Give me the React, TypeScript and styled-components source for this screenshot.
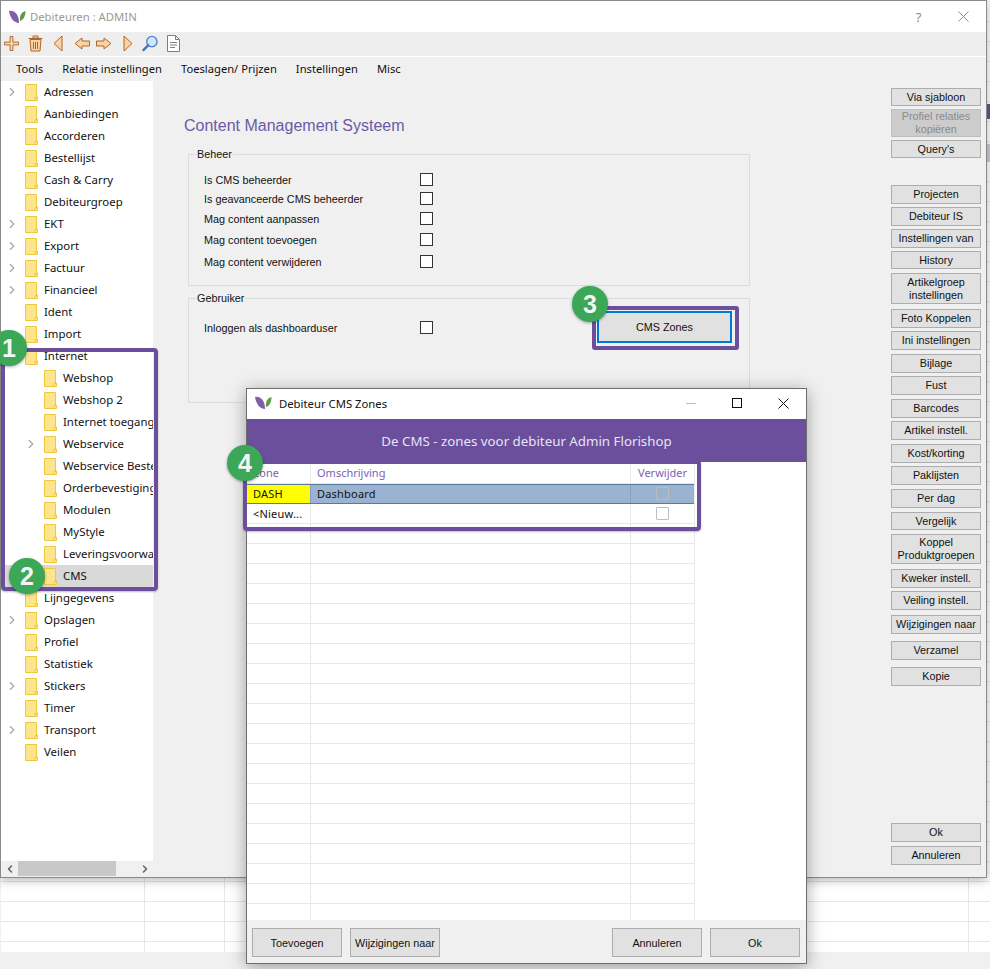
import React, { FC } from 'react'
import styled, { createGlobalStyle } from 'styled-components'
import { ChevronLeft, ChevronRight } from 'lucide-react'

const PURPLE = '#6b4f9c'
const UI_FONT = '"Noto Sans", "Open Sans", sans-serif'
const FORM_FONT = '"Liberation Sans", Arial, sans-serif'

const GlobalStyle = createGlobalStyle`
  html, body {
    margin: 0;
    padding: 0;
    background: #f0f0f0;
  }
  * {
    box-sizing: border-box;
  }
`

const Page = styled.div`
  position: relative;
  width: 990px;
  height: 969px;
  overflow: hidden;
  display: flex;
  flex-direction: column;
`

const Sheet = styled.div`
  height: 952px;
  margin-left: 1px;
  background-color: #fff;
  background-image: linear-gradient(#e6e6e6, #e6e6e6), linear-gradient(#e6e6e6, #e6e6e6),
    linear-gradient(#e6e6e6, #e6e6e6), linear-gradient(to bottom, #e6e6e6 1px, transparent 1px);
  background-size: 1px 100%, 1px 100%, 1px 100%, 100% 20px;
  background-position: 143px 0, 223px 0, 967px 0, 0 1px;
  background-repeat: no-repeat, no-repeat, no-repeat, repeat-y;
`

const SheetStrip = styled.div<{ $top: number; $height: number; $color: string }>`
  position: absolute;
  right: 0;
  top: ${(p) => p.$top}px;
  width: 4px;
  height: ${(p) => p.$height}px;
  background: ${(p) => p.$color};
`

const MainWindow = styled.div`
  position: absolute;
  left: 0;
  top: 0;
  width: 987px;
  height: 878px;
  display: flex;
  flex-direction: column;
  background: #f0f0f0;
  border: 1px solid #8a8a8a;
  box-shadow: 0 2px 10px rgba(0, 0, 0, 0.3);
`

const TitleBar = styled.div<{ $height: number; $lift?: number }>`
  height: ${(p) => p.$height}px;
  padding-bottom: ${(p) => p.$lift ?? 0}px;
  flex: none;
  display: flex;
  align-items: center;
  background: #fff;
`

const TitleText = styled.span<{ $muted?: boolean }>`
  font: 11.3px ${UI_FONT};
  color: ${(p) => (p.$muted ? '#9a9a9a' : '#111')};
  flex: 1;
`

const Logo = styled.svg`
  flex: none;
  width: 17px;
  height: 14px;
`

const TitleLogo = styled(Logo)<{ $left: number; $right: number }>`
  margin-left: ${(p) => p.$left}px;
  margin-right: ${(p) => p.$right}px;
`

const WindowControl = styled.div<{ $width: number }>`
  flex: none;
  width: ${(p) => p.$width}px;
  height: 100%;
  display: flex;
  align-items: center;
  justify-content: center;
`

const HelpMark = styled.span`
  font: 13px ${UI_FONT};
  color: #8c8c8c;
`

const Toolbar = styled.div`
  height: 23px;
  flex: none;
  display: flex;
  align-items: center;
  padding-left: 3px;
  margin-bottom: 1px;
  background: #eeeeee;
`

const ToolIcon = styled.svg<{ $gap: number }>`
  flex: none;
  height: 17px;
  margin-left: ${(p) => p.$gap}px;
`

const MenuSeparator = styled.div`
  height: 1px;
  flex: none;
  background: #fff;
`

const MenuBar = styled.div`
  height: 24px;
  flex: none;
  display: flex;
  align-items: center;
  gap: 19px;
  padding: 0 0 2px 15px;
  font: 11.2px ${UI_FONT};
  color: #111;
`

const Body = styled.div`
  flex: 1;
  min-height: 0;
  display: flex;
`

const TreePane = styled.div`
  flex: none;
  width: 152px;
  display: flex;
  flex-direction: column;
`

const Tree = styled.div`
  flex: 1;
  overflow: hidden;
  background: #fff;
`

const TreeRow = styled.div<{ $depth: number; $selected?: boolean }>`
  height: 22px;
  display: flex;
  align-items: center;
  padding-left: ${(p) => 4 + p.$depth * 19}px;
  white-space: nowrap;
  background: ${(p) => (p.$selected ? '#d9d9d9' : 'transparent')};
  font: 11.4px ${UI_FONT};
  color: #111;
`

const TreeLabel = styled.span`
  margin-bottom: 2px;
`

const Expander = styled.span`
  flex: none;
  width: 20px;
  display: flex;
  color: #a6a6a6;
`

const FolderGlyph = styled.svg`
  flex: none;
  width: 13px;
  height: 17px;
  margin-right: 6px;
`

const ScrollBar = styled.div`
  height: 15px;
  margin-bottom: 1px;
  flex: none;
  display: flex;
  align-items: center;
  background: #f0f0f0;
  color: #606060;
`

const ScrollArrow = styled.span`
  flex: none;
  width: 17px;
  display: flex;
  justify-content: center;
`

const ScrollThumb = styled.div`
  width: 98px;
  height: 100%;
  flex: none;
  margin-right: 20px;
  background: #c8c8c8;
`

const Content = styled.div`
  flex: 1;
  padding: 35px 0 0 35px;
`

const Heading = styled.h1`
  margin: 0 0 12px -4px;
  height: 20px;
  font: 400 16px/20px ${FORM_FONT};
  color: #6c5aa6;
`

const Group = styled.fieldset<{ $height: number }>`
  width: 562px;
  height: ${(p) => p.$height}px;
  margin: 0 0 6px;
  padding: 0 0 0 15px;
  border: 1px solid #dcdcdc;
  font: 10.8px ${FORM_FONT};
  color: #111;
`

const GroupTitle = styled.legend`
  margin-left: -8px;
  padding: 0 1px;
  line-height: 13px;
`

const FormRow = styled.div<{ $gap: number }>`
  display: flex;
  align-items: center;
  height: 19px;
  margin-top: ${(p) => p.$gap}px;
`

const FormLabel = styled.span`
  flex: none;
  width: 216px;
`

const CheckBox = styled.span`
  flex: none;
  width: 13px;
  height: 13px;
  background: #fff;
  border: 1px solid #333;
`

const FocusRing = styled.div`
  flex: none;
  width: 147px;
  height: 44px;
  margin-left: 159px;
  padding: 1px;
  border: 4px solid ${PURPLE};
  border-radius: 3px;
`

const FocusedButton = styled.button`
  display: block;
  width: 135px;
  height: 32px;
  padding: 0;
  background: #e1e1e1;
  border: 2px solid #0078d7;
  font: 10.8px ${FORM_FONT};
  color: #111;
`

const SideBar = styled.div`
  flex: none;
  width: 95px;
  padding: 7px 0 12px;
  display: flex;
  flex-direction: column;
`

const SideSpacer = styled.div`
  flex: 1;
`

const SideButton = styled.button<{ $height: number; $gap: number; $disabled?: boolean }>`
  flex: none;
  width: 90px;
  height: ${(p) => p.$height}px;
  margin-top: ${(p) => p.$gap}px;
  padding: 0;
  background: ${(p) => (p.$disabled ? '#cccccc' : '#e1e1e1')};
  border: 1px solid ${(p) => (p.$disabled ? '#bfbfbf' : '#adadad')};
  font: 10.8px/13px ${FORM_FONT};
  color: ${(p) => (p.$disabled ? '#8a8a8a' : '#111')};
`

const Dialog = styled.div`
  position: absolute;
  left: 246px;
  top: 388px;
  width: 561px;
  height: 576px;
  display: flex;
  flex-direction: column;
  background: #fff;
  border: 1px solid #6e6e6e;
  box-shadow: 0 3px 16px rgba(0, 0, 0, 0.35);
`

const Banner = styled.div`
  height: 43px;
  flex: none;
  display: flex;
  align-items: center;
  justify-content: center;
  background: ${PURPLE};
  font: 13.3px ${UI_FONT};
  color: #e4e4f4;
`

const GridArea = styled.div`
  flex: 1;
  min-height: 0;
  overflow: hidden;
  width: 448px;
  border-right: 1px solid #e8e8e8;
`

const GridCell = styled.div<{ $yellow?: boolean; $center?: boolean }>`
  display: flex;
  align-items: center;
  justify-content: ${(p) => (p.$center ? 'center' : 'flex-start')};
  padding-left: ${(p) => (p.$center ? 0 : 6)}px;
  overflow: hidden;
  white-space: nowrap;
  border-right: 1px solid #e8e8e8;
  background: ${(p) => (p.$yellow ? '#ffff00' : 'transparent')};
  &:last-child {
    border-right: 0;
  }
`

const GridRow = styled.div<{ $height: number; $active?: boolean }>`
  display: grid;
  grid-template-columns: 64px 320px 1fr;
  height: ${(p) => p.$height}px;
  border-bottom: 1px solid ${(p) => (p.$active ? '#5c7a99' : '#e8e8e8')};
  border-top: ${(p) => (p.$active ? '1px solid #5c7a99' : '0')};
  background: ${(p) => (p.$active ? '#9ab3d0' : '#fff')};
  font: 11px ${UI_FONT};
  letter-spacing: 0.2px;
  color: #111;

  ${GridCell} {
    border-right-color: ${(p) => (p.$active ? '#86a0bd' : '#e8e8e8')};
    padding-bottom: ${(p) => (p.$active ? 2 : 0)}px;
  }
`

const HeaderLabel = styled.span`
  color: #7d5fb2;
  letter-spacing: 0;
`

const GridCheck = styled.span`
  width: 13px;
  height: 13px;
  border: 1px solid #bdbdbd;
  border-radius: 1px;
`

const DialogFooter = styled.div`
  height: 43px;
  flex: none;
  display: flex;
  align-items: flex-start;
  gap: 8px;
  padding: 8px 6px 0 5px;
  background: #f0f0f0;
`

const FooterButton = styled.button<{ $push?: boolean }>`
  width: 90px;
  height: 29px;
  margin-left: ${(p) => (p.$push ? 'auto' : 0)};
  padding: 0;
  background: #e1e1e1;
  border: 1px solid #adadad;
  font: 10.8px ${FORM_FONT};
  color: #111;
`

const Callout = styled.div<{ $left: number; $top: number; $width: number; $height: number }>`
  position: absolute;
  left: ${(p) => p.$left}px;
  top: ${(p) => p.$top}px;
  width: ${(p) => p.$width}px;
  height: ${(p) => p.$height}px;
  border: 4px solid ${PURPLE};
  border-radius: 4px;
  box-shadow: 0 1px 2px rgba(0, 0, 0, 0.25);
`

const Badge = styled.div<{ $left: number; $top: number }>`
  position: absolute;
  left: ${(p) => p.$left}px;
  top: ${(p) => p.$top}px;
  width: 36px;
  height: 36px;
  display: flex;
  align-items: center;
  justify-content: center;
  border-radius: 50%;
  background: #3ba757;
  box-shadow: 0 1px 3px rgba(0, 0, 0, 0.35);
  font: 700 25px ${FORM_FONT};
  color: #f4f4f4;
`

const LeafLogo: FC<{ left: number; right: number }> = ({ left, right }) => (
  <TitleLogo $left={left} $right={right} viewBox="0 0 17 14">
    <path d="M0 1 C5 0 10 4 10 13 C5 13 1 8 0 1 Z" fill="#7e5fa8" />
    <path d="M16.5 1 C12.5 2 10.5 5 11 11 C14.5 10 16.5 6 16.5 1 Z" fill="#5d9a45" />
  </TitleLogo>
)

const CloseGlyph: FC<{ color: string }> = ({ color }) => (
  <svg width="11" height="11" viewBox="0 0 11 11">
    <path d="M0.5 0.5 L10.5 10.5 M10.5 0.5 L0.5 10.5" stroke={color} strokeWidth="1" fill="none" />
  </svg>
)

const Folder: FC = () => (
  <FolderGlyph viewBox="0 0 13 17">
    <path d="M0.5 0.5 H11.5 V13 H12.5 V16.5 H0.5 Z" fill="#fde58e" stroke="#f0c83c" />
    <path d="M10 16 V13.5 H12" fill="none" stroke="#f0c83c" />
  </FolderGlyph>
)

const STROKE = '#b0672c'
const FILL = '#fbd2a4'

const ToolbarIcons: FC = () => (
  <>
    <ToolIcon $gap={0} width="15" viewBox="0 0 16 17">
      <path d="M6.5 1 H9.5 V7 H15.5 V10 H9.5 V16 H6.5 V10 H0.5 V7 H6.5 Z" fill={FILL} stroke={STROKE} />
    </ToolIcon>
    <ToolIcon $gap={9} width="15" viewBox="0 0 15 17">
      <path d="M2 4.5 H13 L12 16 H3 Z" fill={FILL} stroke={STROKE} />
      <path d="M0.5 3.5 H14.5 M5 1 H10 V3 H5 Z M5.5 7 V14 M7.5 7 V14 M9.5 7 V14" fill="none" stroke={STROKE} />
    </ToolIcon>
    <ToolIcon $gap={10} width="10" viewBox="0 0 10 17">
      <path d="M9 1 V16 L1 8.5 Z" fill={FILL} stroke={STROKE} />
    </ToolIcon>
    <ToolIcon $gap={11} width="16" viewBox="0 0 16 17">
      <path d="M8 3 L1 8.5 L8 14 V11 H15.5 V6 H8 Z" fill={FILL} stroke={STROKE} />
    </ToolIcon>
    <ToolIcon $gap={6} width="16" viewBox="0 0 16 17">
      <path d="M8 3 L15 8.5 L8 14 V11 H0.5 V6 H8 Z" fill={FILL} stroke={STROKE} />
    </ToolIcon>
    <ToolIcon $gap={11} width="10" viewBox="0 0 10 17">
      <path d="M1 1 V16 L9 8.5 Z" fill={FILL} stroke={STROKE} />
    </ToolIcon>
    <ToolIcon $gap={9} width="16" viewBox="0 0 17 17">
      <circle cx="10.5" cy="6.5" r="5.5" fill="#cfe6fb" stroke="#4a86c8" strokeWidth="1.4" />
      <path d="M6.5 10.5 L1.5 15.5" stroke="#3f73c0" strokeWidth="2.4" strokeLinecap="round" />
    </ToolIcon>
    <ToolIcon $gap={9} width="13" viewBox="0 0 13 17">
      <path d="M0.5 0.5 H8.5 L12.5 4.5 V16.5 H0.5 Z M8.5 0.5 V4.5 H12.5" fill="#fff" stroke="#7d7d7d" />
      <path d="M3 7.5 H10 M3 10 H10 M3 12.5 H8" stroke="#7d7d7d" />
    </ToolIcon>
  </>
)

const treeItems: { label: string; depth: number; expandable?: boolean; selected?: boolean }[] = [
  { label: 'Adressen', depth: 0, expandable: true },
  { label: 'Aanbiedingen', depth: 0 },
  { label: 'Accorderen', depth: 0 },
  { label: 'Bestellijst', depth: 0 },
  { label: 'Cash & Carry', depth: 0 },
  { label: 'Debiteurgroep', depth: 0 },
  { label: 'EKT', depth: 0, expandable: true },
  { label: 'Export', depth: 0, expandable: true },
  { label: 'Factuur', depth: 0, expandable: true },
  { label: 'Financieel', depth: 0, expandable: true },
  { label: 'Ident', depth: 0 },
  { label: 'Import', depth: 0 },
  { label: 'Internet', depth: 0 },
  { label: 'Webshop', depth: 1 },
  { label: 'Webshop 2', depth: 1 },
  { label: 'Internet toegang', depth: 1 },
  { label: 'Webservice', depth: 1, expandable: true },
  { label: 'Webservice Bestellingen', depth: 1 },
  { label: 'Orderbevestigingen', depth: 1 },
  { label: 'Modulen', depth: 1 },
  { label: 'MyStyle', depth: 1 },
  { label: 'Leveringsvoorwaarden', depth: 1 },
  { label: 'CMS', depth: 1, selected: true },
  { label: 'Lijngegevens', depth: 0 },
  { label: 'Opslagen', depth: 0, expandable: true },
  { label: 'Profiel', depth: 0 },
  { label: 'Statistiek', depth: 0 },
  { label: 'Stickers', depth: 0, expandable: true },
  { label: 'Timer', depth: 0 },
  { label: 'Transport', depth: 0, expandable: true },
  { label: 'Veilen', depth: 0 },
]

const sideButtons: { label: React.ReactNode; height: number; gap: number; disabled?: boolean }[] = [
  { label: 'Via sjabloon', height: 18, gap: 0 },
  { label: <>Profiel relaties<br />kopiëren</>, height: 28, gap: 3, disabled: true },
  { label: "Query's", height: 18, gap: 3 },
  { label: 'Projecten', height: 19, gap: 27 },
  { label: 'Debiteur IS', height: 19, gap: 3 },
  { label: 'Instellingen van', height: 19, gap: 3 },
  { label: 'History', height: 18, gap: 3 },
  { label: <>Artikelgroep<br />instellingen</>, height: 31, gap: 4 },
  { label: 'Foto Koppelen', height: 19, gap: 5 },
  { label: 'Ini instellingen', height: 19, gap: 3 },
  { label: 'Bijlage', height: 19, gap: 4 },
  { label: 'Fust', height: 19, gap: 3 },
  { label: 'Barcodes', height: 19, gap: 4 },
  { label: 'Artikel instell.', height: 19, gap: 3 },
  { label: 'Kost/korting', height: 19, gap: 4 },
  { label: 'Paklijsten', height: 19, gap: 3 },
  { label: 'Per dag', height: 19, gap: 4 },
  { label: 'Vergelijk', height: 18, gap: 4 },
  { label: <>Koppel<br />Produktgroepen</>, height: 30, gap: 4 },
  { label: 'Kweker instell.', height: 19, gap: 5 },
  { label: 'Veiling instell.', height: 19, gap: 3 },
  { label: 'Wijzigingen naar', height: 19, gap: 5 },
  { label: 'Verzamel', height: 19, gap: 7 },
  { label: 'Kopie', height: 19, gap: 7 },
]

const beheerRows = [
  { label: 'Is CMS beheerder', gap: 9 },
  { label: 'Is geavanceerde CMS beheerder', gap: 0 },
  { label: 'Mag content aanpassen', gap: 1 },
  { label: 'Mag content toevoegen', gap: 2 },
  { label: 'Mag content verwijderen', gap: 3 },
]

const emptyRows = Array.from({ length: 20 }, (_, i) => i)

const App: FC = () => {
  return (
    <Page>
      <GlobalStyle />
      <Sheet />
      <SheetStrip $top={104} $height={15} $color={PURPLE} />
      <SheetStrip $top={144} $height={18} $color="#c5ced8" />

      <MainWindow>
        <TitleBar $height={31}>
          <LeafLogo left={8} right={4} />
          <TitleText $muted>Debiteuren : ADMIN</TitleText>
          <WindowControl $width={45}>
            <HelpMark>?</HelpMark>
          </WindowControl>
          <WindowControl $width={45}>
            <CloseGlyph color="#8c8c8c" />
          </WindowControl>
        </TitleBar>

        <Toolbar>
          <ToolbarIcons />
        </Toolbar>
        <MenuSeparator />

        <MenuBar>
          <span>Tools</span>
          <span>Relatie instellingen</span>
          <span>Toeslagen/ Prijzen</span>
          <span>Instellingen</span>
          <span>Misc</span>
        </MenuBar>

        <Body>
          <TreePane>
            <Tree>
              {treeItems.map((item) => (
                <TreeRow key={item.label} $depth={item.depth} $selected={item.selected}>
                  <Expander>
                    {item.expandable && <ChevronRight size={14} strokeWidth={2} />}
                  </Expander>
                  <Folder />
                  <TreeLabel>{item.label}</TreeLabel>
                </TreeRow>
              ))}
            </Tree>
            <ScrollBar>
              <ScrollArrow>
                <ChevronLeft size={12} strokeWidth={3} />
              </ScrollArrow>
              <ScrollThumb />
              <ScrollArrow>
                <ChevronRight size={12} strokeWidth={3} />
              </ScrollArrow>
            </ScrollBar>
          </TreePane>

          <Content>
            <Heading>Content Management Systeem</Heading>
            <Group $height={138}>
              <GroupTitle>Beheer</GroupTitle>
              {beheerRows.map((row) => (
                <FormRow key={row.label} $gap={row.gap}>
                  <FormLabel>{row.label}</FormLabel>
                  <CheckBox />
                </FormRow>
              ))}
            </Group>
            <Group $height={111}>
              <GroupTitle>Gebruiker</GroupTitle>
              <FormRow $gap={13}>
                <FormLabel>Inloggen als dashboarduser</FormLabel>
                <CheckBox />
                <FocusRing>
                  <FocusedButton>CMS Zones</FocusedButton>
                </FocusRing>
              </FormRow>
            </Group>
          </Content>

          <SideBar>
            {sideButtons.map((b, i) => (
              <SideButton key={i} $height={b.height} $gap={b.gap} $disabled={b.disabled}>
                {b.label}
              </SideButton>
            ))}
            <SideSpacer />
            <SideButton $height={19} $gap={0}>Ok</SideButton>
            <SideButton $height={19} $gap={4}>Annuleren</SideButton>
          </SideBar>
        </Body>
      </MainWindow>

      <Dialog>
        <TitleBar $height={30} $lift={2}>
          <LeafLogo left={8} right={7} />
          <TitleText>Debiteur CMS Zones</TitleText>
          <WindowControl $width={46}>
            <svg width="10" height="1" viewBox="0 0 10 1">
              <path d="M0 0.5 H10" stroke="#bdbdbd" />
            </svg>
          </WindowControl>
          <WindowControl $width={46}>
            <svg width="10" height="10" viewBox="0 0 10 10">
              <rect x="0.5" y="0.5" width="9" height="9" fill="none" stroke="#111" />
            </svg>
          </WindowControl>
          <WindowControl $width={46}>
            <CloseGlyph color="#111" />
          </WindowControl>
        </TitleBar>

        <Banner>De CMS - zones voor debiteur Admin Florishop</Banner>

        <GridArea>
          <GridRow $height={22}>
            <GridCell><HeaderLabel>Zone</HeaderLabel></GridCell>
            <GridCell><HeaderLabel>Omschrijving</HeaderLabel></GridCell>
            <GridCell $center><HeaderLabel>Verwijder</HeaderLabel></GridCell>
          </GridRow>
          <GridRow $height={20} $active>
            <GridCell $yellow>DASH</GridCell>
            <GridCell>Dashboard</GridCell>
            <GridCell $center><GridCheck /></GridCell>
          </GridRow>
          <GridRow $height={20}>
            <GridCell>&lt;Nieuw...</GridCell>
            <GridCell />
            <GridCell $center><GridCheck /></GridCell>
          </GridRow>
          {emptyRows.map((i) => (
            <GridRow key={i} $height={20}>
              <GridCell />
              <GridCell />
              <GridCell />
            </GridRow>
          ))}
        </GridArea>

        <DialogFooter>
          <FooterButton>Toevoegen</FooterButton>
          <FooterButton>Wijzigingen naar</FooterButton>
          <FooterButton $push>Annuleren</FooterButton>
          <FooterButton>Ok</FooterButton>
        </DialogFooter>
      </Dialog>

      <Callout $left={1} $top={348} $width={157} $height={243} />
      <Callout $left={243} $top={460} $width={458} $height={71} />

      <Badge $left={-9} $top={330}>1</Badge>
      <Badge $left={9} $top={558}>2</Badge>
      <Badge $left={572} $top={286}>3</Badge>
      <Badge $left={227} $top={445}>4</Badge>
    </Page>
  )
}

export default App
